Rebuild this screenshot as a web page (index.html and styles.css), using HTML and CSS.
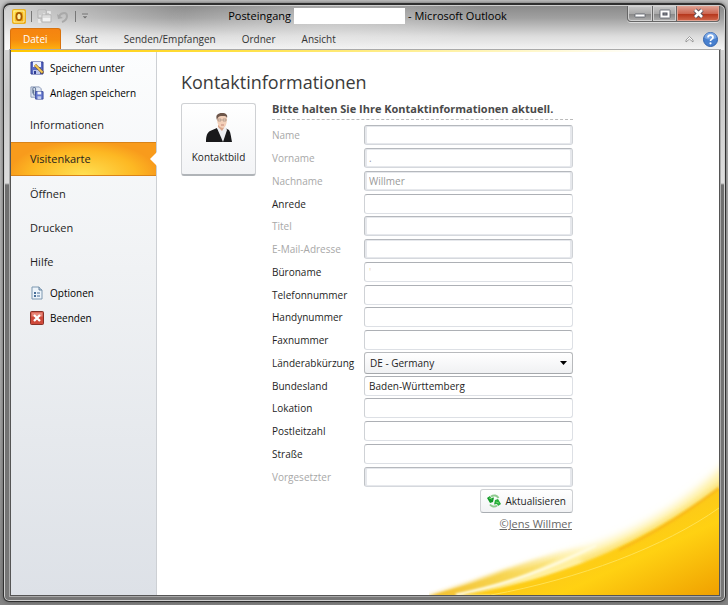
FILE: index.html
```html
<!DOCTYPE html>
<html lang="de">
<head>
<meta charset="utf-8">
<title>Posteingang - Microsoft Outlook</title>
<link rel="stylesheet" href="styles.css">
</head>
<body>
<div class="window">
  <header class="chrome">
    <div class="titlebar">
      <div class="quick">
        <svg width="14" height="15" viewBox="0 0 14 15"><defs><linearGradient id="ol" x2="1" y2="1"><stop offset="0" stop-color="#ffe23c"/><stop offset="1" stop-color="#f09a00"/></linearGradient></defs><rect x=".5" y=".5" width="13" height="14" rx="1" fill="url(#ol)" stroke="#e9b022"/><path d="M2 2h10v11H2z" fill="none" stroke="#fff3a8"/><ellipse cx="7" cy="7.5" rx="2.6" ry="3.6" fill="#fff1a0" stroke="#a95a00" stroke-width="1.7"/></svg>
        <span class="bar"></span>
        <svg width="15" height="15" viewBox="0 0 15 15"><path d="M1 1h8v8H1z" fill="#dedede" stroke="#b0b0b0"/><path d="M2 3h6M2 5h4" stroke="#b8b8b8"/><path d="M5 6h9v7H5z" fill="#f2f2f2" stroke="#b5b5b5"/><path d="M5 8h9" stroke="#c8c8c8"/><path d="M10 3h3v2M2 10v3h2" fill="none" stroke="#efefef" stroke-width="1.500"/></svg>
        <svg width="12" height="12" viewBox="0 0 12 12"><path d="M2 5c3-4 8-4 8 0 0 3-2 5-5 6" fill="none" stroke="#a9a9a9" stroke-width="2"/><path d="M0 3l1 5 5-1z" fill="#a9a9a9"/></svg>
        <span class="bar bar-last"></span>
        <svg width="8" height="7" viewBox="0 0 8 7"><path d="M1 1h6" stroke="#777"/><path d="M1 3h6L4 6z" fill="#777" stroke="#ddd" stroke-width=".4"/></svg>
      </div>
      <div class="title"><span>Posteingang</span><span class="blank"></span><span>- Microsoft Outlook</span></div>
      <div class="controls">
        <button class="ctl ctl-min" aria-label="Minimieren"><svg width="12" height="10" viewBox="0 0 12 10"><rect x="1" y="5" width="10" height="3" rx=".5" fill="#fff" stroke="#555b66" stroke-width=".8"/></svg></button>
        <button class="ctl ctl-max" aria-label="Maximieren"><svg width="12" height="10" viewBox="0 0 12 10"><rect x="1" y="1" width="10" height="8" rx=".5" fill="#fff" stroke="#555b66" stroke-width=".8"/><rect x="4" y="4" width="4" height="2" fill="#999" stroke="#4c515e"/></svg></button>
        <button class="ctl ctl-close" aria-label="Schließen"><svg width="13" height="11" viewBox="0 0 13 11"><path d="M3 2l7 7M10 2L3 9" stroke="#4e4a55" stroke-width="4.4"/><path d="M3 2l7 7M10 2L3 9" stroke="#fff" stroke-width="2.6"/></svg></button>
      </div>
    </div>
    <nav class="tabs">
      <a class="tab tab-file" href="#datei">Datei</a>
      <a class="tab" href="#start">Start</a>
      <a class="tab" href="#senden">Senden/Empfangen</a>
      <a class="tab" href="#ordner">Ordner</a>
      <a class="tab" href="#ansicht">Ansicht</a>
      <div class="ribbon-tools">
        <svg width="9" height="8" viewBox="0 0 9 8"><path d="M1 5l3.500-3.500L8 5v2L4.500 4 1 7z" fill="#fff" stroke="#858585" stroke-width=".8"/></svg>
        <svg width="15" height="15" viewBox="0 0 15 15"><circle cx="7.500" cy="7.500" r="7" fill="#4880cf" stroke="#3463ac"/><path d="M1.500 6a6 5.500 0 0 1 12 0c-4 2-8 2-12 0z" fill="#79a6e4"/><path d="M5 5.500c0-3.200 5-3.200 5 0 0 1.700-2.500 1.600-2.500 3.400" fill="none" stroke="#fff" stroke-width="1.700"/><circle cx="7.500" cy="11.300" r="1.100" fill="#fff"/></svg>
      </div>
    </nav>
  </header>
  <div class="backstage">
    <nav class="side">
      <a class="small" href="#speichern"><svg width="14" height="14" viewBox="0 0 14 14"><path d="M1 1h12v12H1z" fill="#5969c5" stroke="#303d91"/><path d="M3 1h8v5H3z" fill="#edf1ff"/><path d="M3 9h7v4H3z" fill="#bbc5e9"/><path d="M4 10h2v3H4z" fill="#303d91"/><path d="M5 4l8 8" stroke="#775019" stroke-width="3"/><path d="M5 4l7.500 7.500" stroke="#f6cb5a" stroke-width="1.800"/></svg>Speichern unter</a>
      <a class="small" href="#anlagen"><svg width="14" height="14" viewBox="0 0 15 15"><path d="M1 1h9l2 2v9H1z" fill="#e0e8f4" stroke="#8796b5"/><path d="M3 8V3c0-2 3-2 3 0v6c0 1-2 1-2 0V4" fill="none" stroke="#647797" stroke-width="1.100"/><path d="M6 6h8v8H6z" fill="#6578cf" stroke="#394b9b"/><path d="M8 6h4v3H8z" fill="#f5f7ff"/><path d="M8 11h4v3H8z" fill="#c4ceed"/></svg>Anlagen speichern</a>
      <a class="big" href="#informationen">Informationen</a>
      <a class="big current" href="#visitenkarte">Visitenkarte</a>
      <a class="big" href="#oeffnen">Öffnen</a>
      <a class="big" href="#drucken">Drucken</a>
      <a class="big" href="#hilfe">Hilfe</a>
      <a class="small" href="#optionen"><svg width="14" height="14" viewBox="0 0 14 14"><path d="M2 1h7l3 3v9H2z" fill="#edf4fa" stroke="#7d98b1"/><path d="M9 1v3h3" fill="#bdcfdf" stroke="#66839e"/><path d="M4 6h2v2H4zM4 9h2v2H4z" fill="#496f98"/><path d="M7 7h3M7 10h3" stroke="#496f98"/></svg>Optionen</a>
      <a class="small" href="#beenden"><svg width="14" height="14" viewBox="0 0 14 14"><rect x=".5" y=".5" width="13" height="13" rx="1" fill="#cf493a" stroke="#873127"/><path d="M1.500 1.500h11v4h-11z" fill="#e78678"/><path d="M4 4l6 6M10 4l-6 6" stroke="#fff" stroke-width="2.300"/></svg>Beenden</a>
    </nav>
    <main class="page">
      <svg class="swoosh" viewBox="0 0 290 160" aria-hidden="true">
        <defs>
          <linearGradient id="gold" x1="0" y1="0" x2="1" y2="1"><stop offset=".35" stop-color="#f9c020"/><stop offset=".65" stop-color="#ffd112"/><stop offset="1" stop-color="#f0a000"/></linearGradient>
          <linearGradient id="low" gradientUnits="userSpaceOnUse" x1="0" x2="165" y1="0" y2="0"><stop offset="0" stop-color="#f2bf2e"/><stop offset=".45" stop-color="#f7d450"/><stop offset="1" stop-color="#fcea8a" stop-opacity="0"/></linearGradient>
          <filter id="soft" x="-20%" y="-20%" width="140%" height="140%"><feGaussianBlur stdDeviation="5"/></filter>
          <filter id="mid" x="-10%" y="-20%" width="120%" height="140%"><feGaussianBlur stdDeviation="2"/></filter>
          <filter id="fine" x="-10%" y="-20%" width="120%" height="140%"><feGaussianBlur stdDeviation="1"/></filter>
        </defs>
        <path d="M302 24C260 68 205 99 160 113 115 124 70 146 10 166L100 164C170 145 240 110 302 60z" fill="#fff0a0" filter="url(#soft)"/>
        <path d="M302 38C250 80 200 106 150 124L160 134C210 114 260 84 302 50z" fill="#fbdc62" opacity=".6" filter="url(#mid)"/>
        <path d="M-4 162C50 147 100 122 165 109C125 132 80 150 27 162z" fill="url(#low)" filter="url(#mid)"/>
        <path d="M0 161C50 148 90 136 130 122C100 141 60 153 27 162z" fill="url(#low)" filter="url(#fine)"/>
        <path d="M167 110C120 134 80 149 27 160" fill="none" stroke="#fffbe0" stroke-width="3" filter="url(#fine)"/>
        <path d="M290 52C225 101 140 143 34 160H290z" fill="url(#gold)" filter="url(#fine)"/>
        <path d="M290 54C225 103 140 145 60 160H290z" fill="url(#gold)"/>
        <path d="M290 73C235 112 150 144 62 160" fill="none" stroke="#ffe252"/>
        <path d="M290 53C255 80 220 101 190 115" fill="none" stroke="#f3a020" stroke-width="2" opacity=".5" filter="url(#fine)"/>
      </svg>
      <h1>Kontaktinformationen</h1>
      <div class="card">
        <button class="picture">
          <svg width="28" height="29" viewBox="0 0 28 29"><path d="M1 29c0-6 1-9 4-11l7-3 5 9 3-9 4 2c2 3 2 8 3 12z" fill="#19191b"/><path d="M12 15l8-2 2 4-4 12z" fill="#eeeff2"/><path d="M13 12h6v3l-2 3-4-4z" fill="#d9a489"/><path d="M12 6c0-5 10-5 10 0 0 5-2 9-4 9-4 0-6-4-6-9z" fill="#f3d0b9"/><path d="M12 7C10 2 13 0 17 0s6 2 5 5c-1-2-2-2-4-2-3 0-5 0-6 4z" fill="#6d564a"/><path d="M13 6h3v2h-3zM18 6h3v2h-3z" fill="none" stroke="#94837a" stroke-width=".6"/><path d="M16 12h3" stroke="#b87468" stroke-width=".8"/></svg>
          <span>Kontaktbild</span>
        </button>
        <form class="form">
          <h2>Bitte halten Sie Ihre Kontaktinformationen aktuell.</h2>
          <div class="fields">
            <label class="off" for="f1">Name</label><input id="f1" disabled>
            <label class="off" for="f2">Vorname</label><input id="f2" value="." disabled>
            <label class="off" for="f3">Nachname</label><input id="f3" value="Willmer" disabled>
            <label for="f4">Anrede</label><input id="f4">
            <label class="off" for="f5">Titel</label><input id="f5" disabled>
            <label class="off" for="f6">E-Mail-Adresse</label><input id="f6" disabled>
            <label for="f7">Büroname</label><input id="f7" class="faint" value="'">
            <label for="f8">Telefonnummer</label><input id="f8">
            <label for="f9">Handynummer</label><input id="f9">
            <label for="f10">Faxnummer</label><input id="f10">
            <label for="f11">Länderabkürzung</label><div class="combo"><select id="f11"><option>DE - Germany</option></select><svg width="7" height="4" viewBox="0 0 7 4"><path d="M0 0h7L3.500 4z" fill="#000"/></svg></div>
            <label for="f12">Bundesland</label><input id="f12" value="Baden-Württemberg">
            <label for="f13">Lokation</label><input id="f13">
            <label for="f14">Postleitzahl</label><input id="f14">
            <label for="f15">Straße</label><input id="f15">
            <label class="off" for="f16">Vorgesetzter</label><input id="f16" disabled>
          </div>
          <div class="actions">
            <button class="update" type="button"><svg width="14" height="14" viewBox="0 0 14 14"><path d="M4 2.500c3-2 6-1 7.500 1.500M10 11.500c-2.500 2-5.500 1-7-1" fill="none" stroke="#8fca8f" stroke-width="2"/><path d="M0 4l3-2 1 2 3-.5L6 8 3 9z" fill="#14992a"/><path d="M14 10l-3 2-1-2-3 .5L8 6l3-1z" fill="#27ad3a"/><path d="M2 4l3 1M9 8l3 1" stroke="#6edb70"/></svg>Aktualisieren</button>
            <a class="credit" href="#jens">©Jens Willmer</a>
          </div>
        </form>
      </div>
    </main>
  </div>
</div>
</body>
</html>
```
FILE: styles.css
```css
* { box-sizing: border-box; }

body {
  margin: 0;
  min-height: 100vh;
  display: flex;
  padding: 3px 2px 3px 3px;
  background: linear-gradient(#c4c4c4, #b4b4b4 60%, #858585);
  font: 10px/16px "Open Sans", "Noto Sans", sans-serif;
  color: #1e1e1e;
}

button, input, select { font: inherit; color: inherit; }
a { color: inherit; text-decoration: none; }
svg { display: block; flex: none; }

.window {
  flex: 1;
  display: flex;
  flex-direction: column;
  padding: 0 5px 5px 6px;
  border: 1px solid #2f2f2f;
  border-top-width: 2px;
  border-radius: 7px 7px 6px 6px;
  box-shadow: inset 0 0 0 1px #cfcfcf, 0 0 4px #555;
  background: linear-gradient(#8d8d8d, #aaa 14px, #d5d5d5 32px, #c9c9c9 90px, #ddd 178px, #6f6f6f 180px, #777);
}

.chrome {
  margin: 1px -4px 0 -5px;
  padding: 0 4px 0 5px;
  border-radius: 5px 5px 0 0;
  background:
    radial-gradient(ellipse 160px 34px at 45% 12px, rgba(255, 255, 255, .35), transparent),
    linear-gradient(100deg, rgba(255, 255, 255, .6), transparent 25%),
    linear-gradient(#8a8a8a, #a0a0a0 12px, #dcdcdc 30px, #f5f5f5 44px);
}

.titlebar { display: flex; height: 22px; justify-content: space-between; }

.quick { display: flex; flex: 1; align-items: center; gap: 5px; padding: 0 0 1px 2px; }
.bar { width: 1px; height: 11px; background: #777; }
.bar-last { margin-left: 1px; }

.title { display: flex; align-items: center; padding: 0 0 3px 3px; gap: 3px; font-size: 11px; color: #000; }
.blank { width: 111px; height: 16px; background: #fff; }

.controls { display: flex; flex: 1; justify-content: flex-end; align-items: flex-start; }
.ctl {
  display: flex;
  align-items: center;
  justify-content: center;
  height: 16px;
  padding: 0;
  border: 1px solid #666;
  border-top: 0;
  box-shadow: inset 0 0 0 1px #d0d0d0, 0 1px #ddd;
  background: linear-gradient(#c6c6c6, #aaa 50%, #858585 51%, #b0b0b0);
}
.ctl-min { width: 26px; border-radius: 0 0 0 4px; }
.ctl-max { width: 24px; border-left: 0; }
.ctl-close {
  width: 43px;
  border-left: 0;
  border-radius: 0 0 4px 0;
  box-shadow: inset 0 0 0 1px #e0a090, 0 1px #ddd;
  background: linear-gradient(#dfa193, #cd6853 50%, #b33218 51%, #d2694d);
}

.tabs { display: flex; align-items: stretch; height: 22px; color: #333; }
.tab { padding: 3px 13px 0; }
.tab-file {
  padding: 2px 12px 0;
  margin-right: 2px;
  color: #fff;
  border: 1px solid #d9730d;
  border-bottom: 0;
  border-radius: 3px 3px 0 0;
  background: linear-gradient(#f58310, #f68b0e 50%, #ffb310);
}
.ribbon-tools { display: flex; align-items: center; gap: 9px; margin-left: auto; padding-right: 2px; }

.backstage {
  flex: 1;
  display: flex;
  border: 1px solid #555;
  border-top: 0;
  box-shadow: 0 0 0 1px #aaa;
  background: linear-gradient(90deg, #ffc600, #ffe040 30%, #fff1a0 60%, #fff 90%) top / 100% 2px no-repeat #fff;
  padding-top: 2px;
}

.side {
  flex: none;
  width: 146px;
  padding-top: 3px;
  border-right: 1px solid #cdd0d4;
  background: linear-gradient(#fcfdfe, #f0f2f4 40%, #dde1e7);
}
.small { display: flex; align-items: center; gap: 6px; height: 25px; padding-left: 19px; color: #000; }
.big { display: flex; align-items: center; height: 34px; padding-left: 19px; font-size: 11px; color: #1e1e1e; }
.small + .big { margin-top: 3px; }
.big + .small { margin-top: 1px; }
.big.current {
  position: relative;
  margin-bottom: 1px;
  border-top: 1px solid #d98318;
  border-bottom: 1px solid #d98318;
  background: radial-gradient(ellipse 75px 34px at 50% 100%, #ffe052, #fdb823 70%, #f89b1c);
}
.current::after {
  content: "";
  position: absolute;
  right: -1px;
  top: 9px;
  border: 7px solid transparent;
  border-left: 0;
  border-right-color: #fff;
}

.page { position: relative; flex: 1; padding: 16px 24px 0; }
.swoosh { position: absolute; right: 0; bottom: 0; width: 290px; height: 160px; }

h1 { margin: 0; font-size: 18px; line-height: 28px; font-weight: 400; color: #3b3b3b; }
.card { position: relative; display: flex; align-items: flex-start; gap: 16px; margin-top: 4px; }

.picture {
  flex: none;
  display: flex;
  flex-direction: column;
  align-items: center;
  width: 75px;
  height: 73px;
  margin-top: 3px;
  padding: 9px 0 0;
  gap: 7px;
  border: 1px solid #cfd1d4;
  border-bottom: 2px solid #b0b4b8;
  border-radius: 3px;
  background: linear-gradient(#fff, #f3f4f6);
}

.form { width: 301px; }
h2 {
  margin: 0 0 5px;
  padding-bottom: 2px;
  border-bottom: 1px dashed #bbb;
  font-size: 11px;
  line-height: 17px;
  font-weight: 700;
  color: #4a4a4a;
}
.fields {
  display: grid;
  grid-template-columns: 92px 1fr;
  grid-auto-rows: 1fr;
  align-items: center;
  row-gap: 2px;
  min-height: 362px;
}
.off { color: #a8a8a8; }

input, select {
  width: 100%;
  height: 20px;
  min-width: 0;
  padding: 0 4px;
  border: 1px solid #dde0e5;
  border-top-color: #adb0b5;
  border-left-color: #cfd2d6;
  border-radius: 3px;
  background: #fff;
}
input:disabled {
  color: #999;
  border-color: #b5b8bd #cfd2d6 #d5d8dd #bfc2c6;
  box-shadow: inset 2px 0 #e6e8ec, inset -2px 0 #e6e8ec, inset 0 1px #e6e8ec, inset 0 -1px #e6e8ec;
}
.faint { color: #f0d9ae; }
.combo { position: relative; margin: -1px 0; }
.combo svg { position: absolute; right: 6px; top: 9px; pointer-events: none; }
select {
  display: block;
  appearance: none;
  height: 22px;
  padding: 0 5px;
  border-color: #b8babd #b8babd #a5a8ac;
  background: linear-gradient(#fff, #f0f1f3);
}

.actions { display: flex; flex-direction: column; align-items: flex-end; gap: 3px; margin-top: 2px; }
.update {
  display: flex;
  align-items: center;
  gap: 4px;
  height: 24px;
  padding: 0 6px;
  border: 1px solid #cfd1d4;
  border-bottom-color: #a9adb2;
  border-radius: 3px;
  background: linear-gradient(#fff, #f2f3f5);
}
.credit { padding-right: 1px; font-size: 11px; color: #666; text-decoration: underline; }
```
